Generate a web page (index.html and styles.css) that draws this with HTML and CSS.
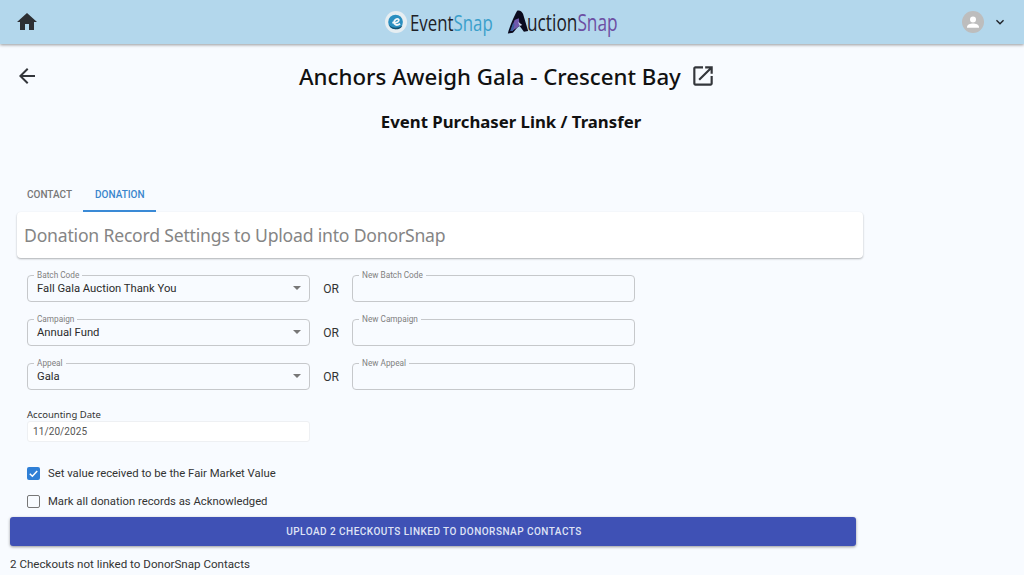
FILE: index.html
```html
<!DOCTYPE html>
<html lang="en">
<head>
<meta charset="UTF-8">
<meta name="viewport" content="width=device-width, initial-scale=1.0">
<title>Event Purchaser Link / Transfer</title>
<link rel="stylesheet" href="styles.css">
</head>
<body>
<header class="topbar">
  <svg class="home-icon" viewBox="0 0 24 24"><path d="M10 20v-6h4v6h5v-8h3L12 3 2 12h3v8z"/></svg>
  <div class="logos">
    <svg class="es-mark" viewBox="0 0 24 24">
      <circle cx="12" cy="12" r="12" fill="#e6eef2"/>
      <circle cx="11.5" cy="12" r="8" fill="#2a8fc0"/>
      <path d="M8 12.5c2 .8 6 .3 7-2 .5-1.600-1.500-2.500-3-1.500-2.500 1.500-3 5-.5 6 1.500.6 3.500 0 5-1" fill="none" stroke="#f2f6f8" stroke-width="2"/>
      <path d="M4 15c4 4 10 4 15 1-2 5-12 6-15-1z" fill="#15506f"/>
    </svg>
    <span class="logo-text">Event<span class="snap-blue">Snap</span></span>
    <svg class="as-mark" viewBox="0 0 26 30">
      <path d="M12 1c3-1 6 1 7 4l6 20-5 1-5-7c-3 1-5 5-8 8l-6 1C3 20 8 8 12 1z" fill="#0b0b1e"/>
      <path d="M9 12l5-2 1 9-6 4-5 2z" fill="#6f58ad"/>
      <path d="M13 14l2 5 3-1z" fill="#cfd6ee"/>
      <path d="M4 25l3-9 2 1-2 8z" fill="#3b5f9e"/>
    </svg>
    <span class="logo-text logo-auction">uction<span class="snap-purple">Snap</span></span>
  </div>
  <div class="user-menu">
    <svg class="avatar" viewBox="0 0 22 22">
      <circle cx="11" cy="11" r="11" fill="#bdbdbd"/>
      <circle cx="11" cy="8.500" r="3" fill="#fff"/>
      <path d="M5 16c0-2.500 3.500-3.500 6-3.500s6 1 6 3.500v.8H5z" fill="#fff"/>
    </svg>
    <svg class="caret-icon" viewBox="0 0 24 24"><path d="M7.410 8.590 12 13.170l4.590-4.580L18 10l-6 6-6-6z"/></svg>
  </div>
</header>

<main class="page">
  <div class="title-row">
    <svg class="back-icon" viewBox="0 0 24 24"><path d="M20 11H7.830l5.590-5.590L12 4l-8 8 8 8 1.410-1.410L7.830 13H20z"/></svg>
    <h1>Anchors Aweigh Gala - Crescent Bay</h1>
    <svg class="open-icon" viewBox="0 0 24 24"><path d="M19 19H5V5h7V3H5c-1.110 0-2 .9-2 2v14c0 1.100.89 2 2 2h14c1.100 0 2-.9 2-2v-7h-2zM14 3v2h3.590l-9.830 9.830 1.410 1.410L19 6.410V10h2V3z"/></svg>
  </div>
  <h2>Event Purchaser Link / Transfer</h2>

  <nav class="tabs">
    <a class="tab">CONTACT</a>
    <a class="tab tab-active">DONATION</a>
  </nav>

  <section class="card">Donation Record Settings to Upload into DonorSnap</section>

  <form class="settings">
    <div class="field-row">
      <fieldset class="field field-select">
        <legend>Batch Code</legend>
        <span class="value">Fall Gala Auction Thank You</span>
        <span class="select-arrow"></span>
      </fieldset>
      <span class="or">OR</span>
      <fieldset class="field"><legend>New Batch Code</legend></fieldset>
    </div>
    <div class="field-row">
      <fieldset class="field field-select">
        <legend>Campaign</legend>
        <span class="value">Annual Fund</span>
        <span class="select-arrow"></span>
      </fieldset>
      <span class="or">OR</span>
      <fieldset class="field"><legend>New Campaign</legend></fieldset>
    </div>
    <div class="field-row">
      <fieldset class="field field-select">
        <legend>Appeal</legend>
        <span class="value">Gala</span>
        <span class="select-arrow"></span>
      </fieldset>
      <span class="or">OR</span>
      <fieldset class="field"><legend>New Appeal</legend></fieldset>
    </div>

    <div class="date-label">Accounting Date</div>
    <div class="date-input">11/20/2025</div>

    <div class="check-row check-first">
      <span class="checkbox checkbox-on">
        <svg viewBox="0 0 14 14"><path d="M3 7.200l2.800 2.800L11 4.400" fill="none" stroke="#fff" stroke-width="1.600"/></svg>
      </span>
      Set value received to be the Fair Market Value
    </div>
    <div class="check-row">
      <span class="checkbox"></span>
      Mark all donation records as Acknowledged
    </div>
  </form>

  <button class="upload-btn" type="button">UPLOAD 2 CHECKOUTS LINKED TO DONORSNAP CONTACTS</button>
  <p class="note">2 Checkouts not linked to DonorSnap Contacts</p>
</main>
</body>
</html>
```

FILE: styles.css
```css
/* page */
html,
body {
  height: 575px;
  overflow: hidden;
}

body {
  margin: 0;
  background-color: #f8fbff;
  font-family: Roboto, sans-serif;
  color: #333;
}

/* top bar */
.topbar {
  height: 44px;
  display: flex;
  align-items: center;
  padding: 0 16px 0 15px;
  background-color: #b3d7ec;
  box-shadow: 0 1px 3px rgba(0, 0, 0, 0.4);
}

.home-icon {
  width: 24px;
  height: 24px;
  fill: #2d2f33;
}

.logos {
  display: flex;
  align-items: center;
  margin-left: 346px;
}

.es-mark {
  width: 22px;
  height: 22px;
}

.as-mark {
  width: 22px;
  height: 27px;
  margin-left: 17px;
}

.logo-text {
  display: inline-block;
  width: 80px;
  margin-left: 3px;
  font-family: "Open Sans", sans-serif;
  font-size: 22px;
  font-weight: 500;
  line-height: 28px;
  color: #1d2026;
  white-space: nowrap;
  transform: scaleX(0.765);
  transform-origin: left center;
}

.logo-auction {
  width: 85px;
  margin-left: -2px;
  font-size: 24px;
  transform: scaleX(0.72);
}

.snap-blue {
  color: #3a9fcb;
}

.snap-purple {
  color: #6d4fa3;
}

.user-menu {
  display: flex;
  align-items: center;
  gap: 8px;
  margin-left: auto;
}

.avatar {
  width: 22px;
  height: 22px;
}

.caret-icon {
  width: 16px;
  height: 16px;
  fill: #1d2026;
}

/* headings */
.title-row {
  display: flex;
  align-items: center;
  height: 42px;
  margin-top: 11px;
  padding-left: 15px;
}

.back-icon {
  width: 24px;
  height: 24px;
  fill: #33363b;
}

h1 {
  margin: 0 0 0 260px;
  font-family: "Noto Sans", sans-serif;
  font-size: 22.25px;
  font-weight: 500;
  color: #111;
  white-space: nowrap;
}

.open-icon {
  width: 26px;
  height: 26px;
  margin-left: 9px;
  fill: #33363b;
}

h2 {
  margin: 13px 0 0;
  padding-right: 2px;
  text-align: center;
  font-family: "Noto Sans", sans-serif;
  font-size: 16.75px;
  line-height: 24px;
  font-weight: 700;
  color: #111;
}

/* tabs */
.tabs {
  display: flex;
  margin: 47px 0 0 15px;
}

.tab {
  padding: 0 10.500px 0 12px;
  height: 31px;
  line-height: 28px;
  font-size: 10px;
  font-weight: 500;
  color: #777;
  box-sizing: border-box;
}

.tab-active {
  color: #3a85cc;
  border-bottom: 2px solid #3a8ad6;
  padding: 0 11px 0 12.500px;
}

/* section card */
.card {
  width: 846px;
  height: 46px;
  margin-left: 17px;
  box-sizing: border-box;
  padding-left: 7px;
  line-height: 46px;
  background-color: #fff;
  border-radius: 4px;
  box-shadow: 0 1px 2px rgba(0, 0, 0, 0.3);
  font-family: "Noto Sans", sans-serif;
  font-size: 17.6px;
  letter-spacing: -0.2px;
  color: #858585;
  white-space: nowrap;
}

/* form */
.settings {
  margin: 12px 0 0 27px;
}

.field-row {
  display: flex;
  align-items: center;
  height: 32px;
  margin-bottom: 12px;
}

.field {
  position: relative;
  width: 283px;
  height: 32px;
  margin: 0;
  padding: 0 9px;
  box-sizing: border-box;
  display: flex;
  align-items: center;
  border: 1px solid #c6c8cb;
  border-radius: 4px;
}

.field legend {
  padding: 0 3px;
  margin-left: -3px;
  font-size: 8.25px;
  line-height: 10px;
  color: #808080;
}

.value {
  font-size: 11.25px;
  color: #2b2b2b;
  margin-top: -4px;
}

.select-arrow {
  position: absolute;
  right: 8px;
  top: 6px;
  border-left: 4px solid transparent;
  border-right: 4px solid transparent;
  border-top: 4px solid #777;
}

.or {
  width: 42px;
  text-align: center;
  font-size: 12px;
  color: #333;
  margin-top: 6px;
}

.date-label {
  margin-top: 18px;
  font-family: "Noto Sans", sans-serif;
  font-size: 9.5px;
  line-height: 13px;
  color: #333;
}

.date-input {
  width: 283px;
  height: 21px;
  box-sizing: border-box;
  margin-top: 0;
  padding-left: 5px;
  line-height: 20px;
  font-size: 10px;
  letter-spacing: 0.1px;
  color: #555;
  background-color: #fff;
  border: 1px solid #eef0f3;
  border-radius: 3px;
}

.check-row {
  display: flex;
  align-items: center;
  gap: 8px;
  height: 16px;
  margin-top: 12px;
  font-size: 11.3px;
  color: #333;
}

.check-first {
  margin-top: 23px;
}

.checkbox {
  width: 13px;
  height: 13px;
  box-sizing: border-box;
  border: 1.500px solid #777;
  border-radius: 2px;
}

.checkbox-on {
  border: none;
  background-color: #2f7fd6;
}

.checkbox svg {
  display: block;
  width: 13px;
  height: 13px;
}

/* bottom */
.upload-btn {
  display: block;
  width: 846px;
  height: 29px;
  margin: 8px 0 0 10px;
  padding: 0 0 0 2px;
  border: none;
  border-radius: 3px;
  background-color: #3f51b5;
  box-shadow: 0 1px 3px rgba(0, 0, 0, 0.4);
  color: #dfe3f5;
  font-family: Roboto, sans-serif;
  font-size: 10px;
  font-weight: 500;
  letter-spacing: 0.47px;
  cursor: pointer;
}

.note {
  margin: 11px 0 0 10px;
  font-size: 11.6px;
  line-height: 14px;
  color: #333;
}
```
